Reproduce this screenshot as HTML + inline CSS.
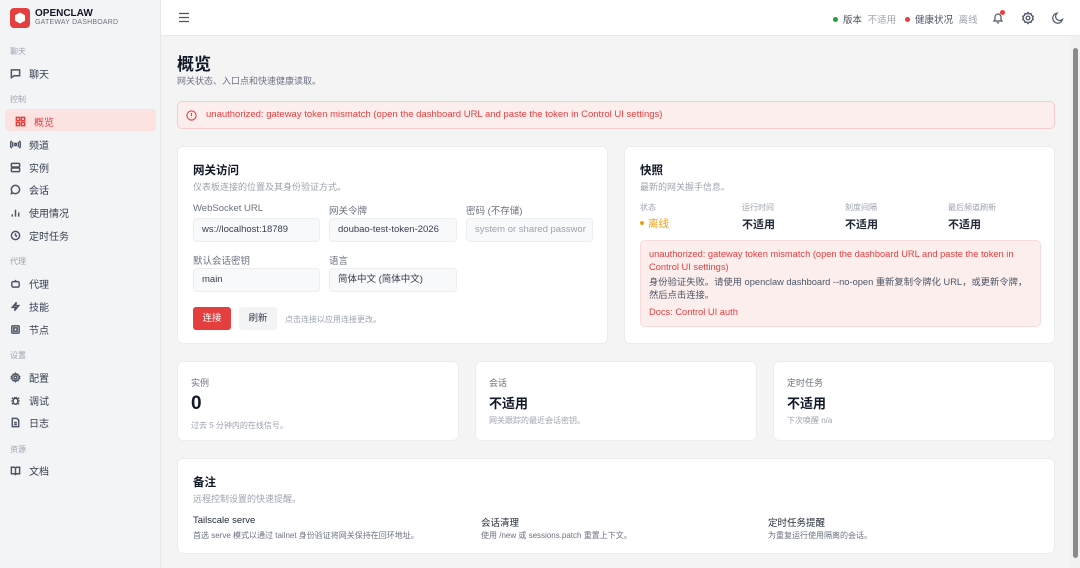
<!DOCTYPE html>
<html><head><meta charset="utf-8"><style>
*{box-sizing:border-box;margin:0;padding:0}
body{width:1080px;height:568px;overflow:hidden;background:#f4f4f5;font-family:"Liberation Sans","Noto Sans CJK SC",sans-serif;color:#1f2937;position:relative}
.abs{position:absolute}
.side{left:0;top:0;width:161px;height:568px;background:#f3f4f6;border-right:1px solid #e5e7eb}
.top{left:161px;top:0;width:919px;height:36px;background:#fff;border-bottom:1px solid #e5e7eb}
.sec{position:absolute;left:10px;font-size:8px;color:#9ca3af}
.nav{position:absolute;left:10px;font-size:10px;color:#374151;display:flex;align-items:center;gap:8px}
.nav svg{width:11px;height:11px;stroke:#4b5563;fill:none;stroke-width:1.6}
.card{position:absolute;background:#fff;border:1px solid #ececee;border-radius:6px}
.h{font-size:11.5px;font-weight:bold;color:#111827}
.sub{font-size:9px;color:#9ca3af}
.lbl{position:absolute;font-size:9.5px;color:#6b7280}
.inp{position:absolute;height:24px;background:#f8f9fa;border:1px solid #eceef0;border-radius:4px;font-size:9.5px;color:#374151;padding:0 8px;line-height:22px;white-space:nowrap;overflow:hidden}
.small{font-size:8px;color:#9ca3af}
.val{font-size:11px;font-weight:bold;color:#1f2937}
</style></head><body>
<div class="abs side">
 <div class="abs" style="left:10px;top:8px;width:20px;height:20px;background:#e53e3e;border-radius:4px"><svg width="20" height="20" viewBox="0 0 20 20"><polygon points="10,4.5 15,7.3 15,12.7 10,15.5 5,12.7 5,7.3" fill="#fff"/></svg></div>
 <div class="abs" style="left:35px;top:8px;font-size:10px;font-weight:bold;color:#111827">OPENCLAW</div>
 <div class="abs" style="left:35px;top:19px;font-size:7px;color:#6b7280;letter-spacing:.2px">GATEWAY DASHBOARD</div>
 <div class="sec" style="top:46px">聊天</div>
 <div class="nav" style="top:66px"><svg viewBox="0 0 12 12"><path d="M1.5 2h9v6.5h-6l-3 2z"/></svg>聊天</div>
 <div class="sec" style="top:94px">控制</div>
 <div class="abs" style="left:5px;top:109px;width:151px;height:22px;background:#fde2e2;border-radius:4px"></div>
 <div class="nav" style="top:114px;left:15px;color:#e53e3e"><svg viewBox="0 0 12 12" style="stroke:#e53e3e"><rect x="1.5" y="1.5" width="3.5" height="3.5"/><rect x="7" y="1.5" width="3.5" height="3.5"/><rect x="1.5" y="7" width="3.5" height="3.5"/><rect x="7" y="7" width="3.5" height="3.5"/></svg>概览</div>
 <div class="nav" style="top:137px"><svg viewBox="0 0 12 12"><circle cx="6" cy="6" r="1.2"/><path d="M3.5 3.5a3.5 3.5 0 0 0 0 5M8.5 3.5a3.5 3.5 0 0 1 0 5M1.8 2a6 6 0 0 0 0 8M10.2 2a6 6 0 0 1 0 8"/></svg>频道</div>
 <div class="nav" style="top:160px"><svg viewBox="0 0 12 12"><rect x="1.5" y="1.5" width="9" height="4" rx="1"/><rect x="1.5" y="6.5" width="9" height="4" rx="1"/></svg>实例</div>
 <div class="nav" style="top:182px"><svg viewBox="0 0 12 12"><path d="M6 1.5a4.5 4.5 0 1 1-2.3 8.4L1.5 10.5l.6-2.2A4.5 4.5 0 0 1 6 1.5z"/></svg>会话</div>
 <div class="nav" style="top:205px"><svg viewBox="0 0 12 12"><path d="M2.5 10.5V8M6 10.5V3M9.5 10.5V6"/></svg>使用情况</div>
 <div class="nav" style="top:228px"><svg viewBox="0 0 12 12"><circle cx="6" cy="6" r="4.5"/><path d="M6 3.5V6l1.8 1.2"/></svg>定时任务</div>
 <div class="sec" style="top:256px">代理</div>
 <div class="nav" style="top:276px"><svg viewBox="0 0 12 12"><rect x="2" y="4" width="8" height="6" rx="1.5"/><path d="M6 4V2M4.5 7h.1M7.5 7h.1"/></svg>代理</div>
 <div class="nav" style="top:299px"><svg viewBox="0 0 12 12"><path d="M7 1.5L2.5 7h3.5L5 10.5 9.5 5H6z"/></svg>技能</div>
 <div class="nav" style="top:322px"><svg viewBox="0 0 12 12"><rect x="2" y="2" width="8" height="8" rx="1"/><rect x="4.2" y="4.2" width="3.6" height="3.6"/></svg>节点</div>
 <div class="sec" style="top:350px">设置</div>
 <div class="nav" style="top:370px"><svg viewBox="0 0 12 12"><circle cx="6" cy="6" r="1.6"/><path d="M6 1.5l1 1.3 1.6-.3.4 1.6 1.5.7-.7 1.2.7 1.2-1.5.7-.4 1.6-1.6-.3-1 1.3-1-1.3-1.6.3-.4-1.6-1.5-.7.7-1.2-.7-1.2 1.5-.7.4-1.6 1.6.3z"/></svg>配置</div>
 <div class="nav" style="top:393px"><svg viewBox="0 0 12 12"><ellipse cx="6" cy="6.8" rx="2.6" ry="3.3"/><path d="M1.5 6.5h2M8.5 6.5h2M2 3l1.8 1.5M10 3L8.2 4.5M2 10l1.8-1.3M10 10l-1.8-1.3M4.5 2.5L6 3.5l1.5-1"/></svg>调试</div>
 <div class="nav" style="top:415px"><svg viewBox="0 0 12 12"><path d="M2.5 1.5h5l2 2v7h-7z M4.5 6h3M4.5 8h3"/></svg>日志</div>
 <div class="sec" style="top:444px">资源</div>
 <div class="nav" style="top:463px"><svg viewBox="0 0 12 12"><path d="M1.5 2.5h3.5l1 1 1-1h3.5v7H7l-1 1-1-1H1.5zM6 3.5v7"/></svg>文档</div>
</div>
<div class="abs top">
 <svg class="abs" style="left:17px;top:12px" width="12" height="11" viewBox="0 0 12 11" stroke="#4b5563" stroke-width="1.3"><path d="M1 1.5h10M1 5.5h10M1 9.5h10"/></svg>
 <div class="abs" style="left:672px;top:12px;font-size:9.5px;color:#4b5563;white-space:nowrap"><span style="display:inline-block;width:5px;height:5px;border-radius:50%;background:#22a33a;margin-right:5px;vertical-align:1px"></span>版本 <span style="color:#9ca3af;margin-left:3px">不适用</span></div>
 <div class="abs" style="left:744px;top:12px;font-size:9.5px;color:#4b5563;white-space:nowrap"><span style="display:inline-block;width:5px;height:5px;border-radius:50%;background:#ef3b3b;margin-right:5px;vertical-align:1px"></span>健康状况 <span style="color:#9ca3af;margin-left:3px">离线</span></div>
 <svg class="abs" style="left:830px;top:11px" width="14" height="14" viewBox="0 0 14 14" fill="none" stroke="#4b5563" stroke-width="1.2"><path d="M3 10h8l-1-1.5V6a3 3 0 0 0-6 0v2.5zM5.8 11.8h2.4"/></svg>
 <div class="abs" style="left:839px;top:10px;width:5px;height:5px;border-radius:50%;background:#ef3b3b"></div>
 <svg class="abs" style="left:860px;top:11px" width="14" height="14" viewBox="0 0 12 12" fill="none" stroke="#4b5563" stroke-width="1.1"><circle cx="6" cy="6" r="1.6"/><path d="M6 1.2l1 1.3 1.6-.3.4 1.6 1.5.7-.7 1.5.7 1.5-1.5.7-.4 1.6-1.6-.3-1 1.3-1-1.3-1.6.3-.4-1.6-1.5-.7.7-1.5-.7-1.5 1.5-.7.4-1.6 1.6.3z"/></svg>
 <svg class="abs" style="left:890px;top:11px" width="14" height="14" viewBox="0 0 14 14" fill="none" stroke="#4b5563" stroke-width="1.2"><path d="M11.5 8.5A5 5 0 1 1 6 2.2a4 4 0 0 0 5.5 6.3z"/></svg>
</div>
<div class="abs" style="left:1071px;top:36px;width:9px;height:532px;background:#f1f1f1"></div>
<div class="abs" style="left:1073px;top:48px;width:5px;height:510px;background:#8a8a8a;border-radius:3px"></div>

<div class="abs" style="left:177px;top:50px;font-size:17px;font-weight:bold;color:#111827">概览</div>
<div class="abs" style="left:177px;top:74px;font-size:9px;color:#6b7280">网关状态、入口点和快速健康读取。</div>
<div class="abs" style="left:177px;top:101px;width:878px;height:28px;background:#fdeeee;border:1px solid #f8caca;border-radius:5px;font-size:9.5px;color:#e53e3e;line-height:26px;padding-left:28px">
 <svg class="abs" style="left:8px;top:8px" width="11" height="11" viewBox="0 0 12 12" fill="none" stroke="#e53e3e" stroke-width="1.2"><circle cx="6" cy="6" r="5"/><path d="M6 3.3v3.2M6 8.3v.4"/></svg>
 unauthorized: gateway token mismatch (open the dashboard URL and paste the token in Control UI settings)</div>

<div class="card" style="left:177px;top:146px;width:431px;height:198px">
 <div class="abs h" style="left:15px;top:15px">网关访问</div>
 <div class="abs sub" style="left:15px;top:33px">仪表板连接的位置及其身份验证方式。</div>
 <div class="lbl" style="left:15px;top:56px">WebSocket URL</div>
 <div class="lbl" style="left:151px;top:56px">网关令牌</div>
 <div class="lbl" style="left:288px;top:56px">密码 (不存储)</div>
 <div class="inp" style="left:15px;top:71px;width:127px">ws://localhost:18789</div>
 <div class="inp" style="left:151px;top:71px;width:128px">doubao-test-token-2026</div>
 <div class="inp" style="left:288px;top:71px;width:127px;color:#9ca3af">system or shared passwor</div>
 <div class="lbl" style="left:15px;top:106px">默认会话密钥</div>
 <div class="lbl" style="left:151px;top:106px">语言</div>
 <div class="inp" style="left:15px;top:121px;width:127px">main</div>
 <div class="inp" style="left:151px;top:121px;width:128px">简体中文 (简体中文)</div>
 <div class="abs" style="left:15px;top:160px;width:38px;height:23px;background:#e53e3e;border-radius:3px;color:#fff;font-size:9.5px;text-align:center;line-height:23px">连接</div>
 <div class="abs" style="left:61px;top:160px;width:38px;height:23px;background:#f3f4f6;border-radius:3px;color:#374151;font-size:9.5px;text-align:center;line-height:23px">刷新</div>
 <div class="abs small" style="left:107px;top:167px">点击连接以应用连接更改。</div>
</div>

<div class="card" style="left:624px;top:146px;width:431px;height:198px">
 <div class="abs h" style="left:15px;top:15px">快照</div>
 <div class="abs sub" style="left:15px;top:33px">最新的网关握手信息。</div>
 <div class="abs small" style="left:15px;top:55px">状态</div>
 <div class="abs small" style="left:117px;top:55px">运行时间</div>
 <div class="abs small" style="left:220px;top:55px">刻度间隔</div>
 <div class="abs small" style="left:323px;top:55px">最后频道刷新</div>
 <div class="abs" style="left:15px;top:69px;font-size:10.5px;color:#f59e0b"><span style="display:inline-block;width:4px;height:4px;border-radius:50%;background:#f59e0b;margin-right:4px;vertical-align:2px"></span>离线</div>
 <div class="abs val" style="left:117px;top:69px">不适用</div>
 <div class="abs val" style="left:220px;top:69px">不适用</div>
 <div class="abs val" style="left:323px;top:69px">不适用</div>
 <div class="abs" style="left:15px;top:93px;width:401px;height:87px;background:#fdeeee;border:1px solid #fadada;border-radius:5px;padding:7px 8px;font-size:9.3px;line-height:13px">
  <div style="color:#e53e3e">unauthorized: gateway token mismatch (open the dashboard URL and paste the token in Control UI settings)</div>
  <div style="color:#4b5563;margin-top:2px">身份验证失败。请使用 openclaw dashboard --no-open 重新复制令牌化 URL，或更新令牌，然后点击连接。</div>
  <div style="color:#e53e3e;margin-top:4px">Docs: Control UI auth</div>
 </div>
</div>

<div class="card" style="left:177px;top:361px;width:282px;height:80px">
 <div class="abs" style="left:13px;top:14px;font-size:9px;color:#6b7280">实例</div>
 <div class="abs" style="left:13px;top:31px;font-size:19px;font-weight:bold;color:#111827">0</div>
 <div class="abs small" style="left:13px;top:58px">过去 5 分钟内的在线信号。</div>
</div>
<div class="card" style="left:475px;top:361px;width:282px;height:80px">
 <div class="abs" style="left:13px;top:14px;font-size:9px;color:#6b7280">会话</div>
 <div class="abs" style="left:13px;top:31px;font-size:13px;font-weight:bold;color:#111827">不适用</div>
 <div class="abs small" style="left:13px;top:53px">网关跟踪的最近会话密钥。</div>
</div>
<div class="card" style="left:773px;top:361px;width:282px;height:80px">
 <div class="abs" style="left:13px;top:14px;font-size:9px;color:#6b7280">定时任务</div>
 <div class="abs" style="left:13px;top:31px;font-size:13px;font-weight:bold;color:#111827">不适用</div>
 <div class="abs small" style="left:13px;top:53px">下次唤醒 n/a</div>
</div>

<div class="card" style="left:177px;top:458px;width:878px;height:96px">
 <div class="abs h" style="left:15px;top:15px">备注</div>
 <div class="abs sub" style="left:15px;top:33px">远程控制设置的快速提醒。</div>
 <div class="abs" style="left:15px;top:56px;font-size:9.5px;color:#1f2937">Tailscale serve</div>
 <div class="abs small" style="left:15px;top:71px;color:#6b7280">首选 serve 模式以通过 tailnet 身份验证将网关保持在回环地址。</div>
 <div class="abs" style="left:303px;top:56px;font-size:9.5px;color:#1f2937">会话清理</div>
 <div class="abs small" style="left:303px;top:71px;color:#6b7280">使用 /new 或 sessions.patch 重置上下文。</div>
 <div class="abs" style="left:590px;top:56px;font-size:9.5px;color:#1f2937">定时任务提醒</div>
 <div class="abs small" style="left:590px;top:71px;color:#6b7280">为重复运行使用隔离的会话。</div>
</div>
</body></html>
